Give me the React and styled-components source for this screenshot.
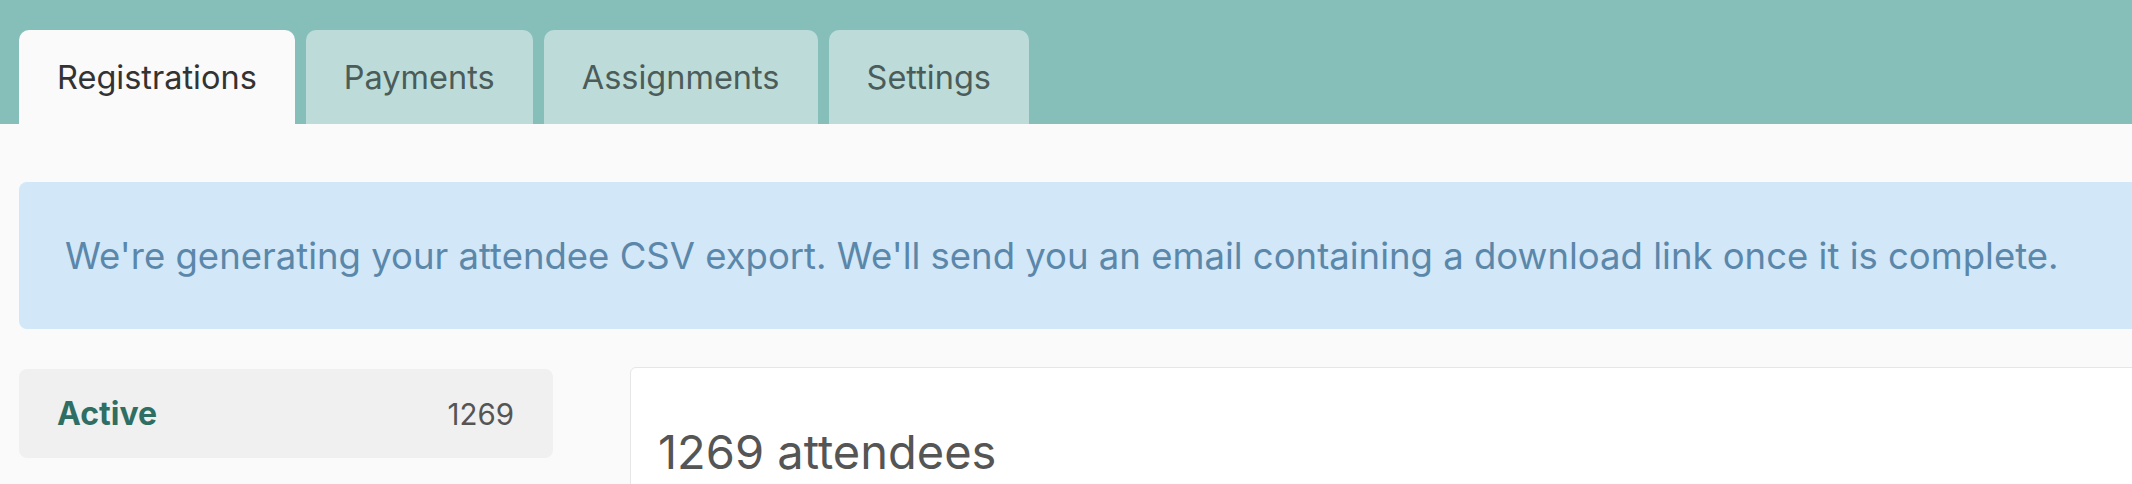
import React, { useState } from 'react';
import styled, { createGlobalStyle } from 'styled-components';

const GlobalStyle = createGlobalStyle`
  body {
    margin: 0;
    background: #fafafa;
    font-family: Inter, "Noto Sans", sans-serif;
    overflow: hidden;
  }
`;

const Header = styled.div`
  background: #86bfb9;
  height: 124px;
  display: flex;
  align-items: flex-end;
  gap: 11px;
  padding: 0 19px;
  box-sizing: border-box;
`;

const Tab = styled.button`
  height: 94px;
  padding: 0 38px;
  border: none;
  border-radius: 10px 10px 0 0;
  background: ${(p) => (p.$active ? '#fafafa' : '#bddcd9')};
  color: ${(p) => (p.$active ? '#333333' : '#4b5c5a')};
  font-family: inherit;
  font-size: 32.5px;
  cursor: pointer;
`;

/* the page is wider than the window, so the alert and card run off the right edge */
const Content = styled.div`
  width: 2300px;
  padding: 58px 19px 0;
`;

const Alert = styled.div`
  height: 147px;
  display: flex;
  align-items: center;
  padding-left: 46px;
  background: #d2e7f7;
  border-radius: 8px;
  color: #5b87aa;
  font-size: 36.5px;
  white-space: nowrap;
`;

const Row = styled.div`
  display: flex;
  align-items: flex-start;
  gap: 77px;
  margin-top: 40px;
`;

const Sidebar = styled.div`
  width: 534px;
  flex-shrink: 0;
`;

const SideItem = styled.div`
  height: 89px;
  display: flex;
  align-items: center;
  justify-content: space-between;
  padding: 0 39px 0 38px;
  background: #f0f0f0;
  border-radius: 8px;
`;

const SideLabel = styled.span`
  color: #2f6e63;
  font-weight: 700;
  font-size: 32px;
`;

const SideCount = styled.span`
  color: #555;
  font-size: 29.5px;
`;

const Card = styled.div`
  flex: 1;
  height: 200px;
  background: #fff;
  border: 1px solid #e6e6e6;
  border-radius: 6px;
  padding: 55px 27px 0;
  margin-top: -2px;
`;

const Title = styled.div`
  color: #555;
  font-size: 47px;
`;

const tabs = ['Registrations', 'Payments', 'Assignments', 'Settings'];

export default function App() {
  const [active, setActive] = useState('Registrations');
  return (
    <>
      <GlobalStyle />
      <Header>
        {tabs.map((t) => (
          <Tab key={t} $active={active === t} onClick={() => setActive(t)}>
            {t}
          </Tab>
        ))}
      </Header>
      <Content>
        <Alert>
          We're generating your attendee CSV export. We'll send you an email containing a download link once it is complete.
        </Alert>
        <Row>
          <Sidebar>
            <SideItem>
              <SideLabel>Active</SideLabel>
              <SideCount>1269</SideCount>
            </SideItem>
          </Sidebar>
          <Card>
            <Title>1269 attendees</Title>
          </Card>
        </Row>
      </Content>
    </>
  );
}
